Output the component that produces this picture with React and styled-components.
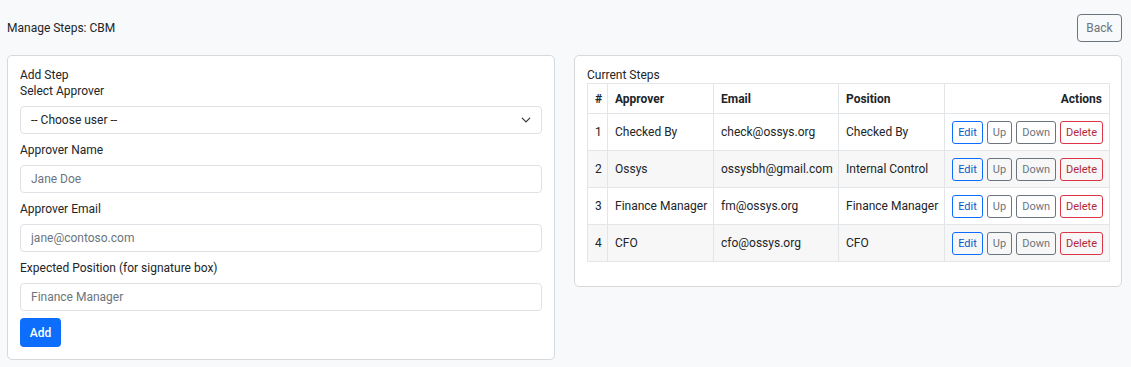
import React from 'react'
import styled, { createGlobalStyle } from 'styled-components'

const steps = [
  { name: 'Checked By', email: 'check@ossys.org', position: 'Checked By' },
  { name: 'Ossys', email: 'ossysbh@gmail.com', position: 'Internal Control' },
  { name: 'Finance Manager', email: 'fm@ossys.org', position: 'Finance Manager' },
  { name: 'CFO', email: 'cfo@ossys.org', position: 'CFO' },
]

const App = () => {
  return (
    <>
      <GlobalStyle />
      <Page>
        <Header>
          <Title>Manage Steps: CBM</Title>
          <BackButton>Back</BackButton>
        </Header>
        <Columns>
          <Card>
            <CardTitle>Add Step</CardTitle>
            <FieldLabel>Select Approver</FieldLabel>
            <SelectBox>
              <span>-- Choose user --</span>
              <svg width="10" height="10" viewBox="0 0 16 16">
                <path d="M2 5l6 6 6-6" fill="none" stroke="#343a40" strokeWidth="2" strokeLinecap="round" strokeLinejoin="round" />
              </svg>
            </SelectBox>
            <FieldLabel spaced>Approver Name</FieldLabel>
            <Input placeholder="Jane Doe" />
            <FieldLabel spaced>Approver Email</FieldLabel>
            <Input placeholder="jane@contoso.com" />
            <FieldLabel spaced>Expected Position (for signature box)</FieldLabel>
            <Input placeholder="Finance Manager" />
            <AddButton>Add</AddButton>
          </Card>
          <Card>
            <CardTitle>Current Steps</CardTitle>
            <Table>
              <colgroup>
                <col style={{ width: 20 }} />
                <col style={{ width: 106 }} />
                <col style={{ width: 125 }} />
                <col style={{ width: 106 }} />
                <col />
              </colgroup>
              <thead>
                <tr>
                  <Th>#</Th>
                  <Th>Approver</Th>
                  <Th>Email</Th>
                  <Th>Position</Th>
                  <Th right>Actions</Th>
                </tr>
              </thead>
              <tbody>
                {steps.map((s, i) => (
                  <Row key={s.email}>
                    <Td>{i + 1}</Td>
                    <Td>{s.name}</Td>
                    <Td>{s.email}</Td>
                    <Td>{s.position}</Td>
                    <Td right>
                      <Actions>
                        <SmallButton tone="#0d6efd" text="#0a58ca">Edit</SmallButton>
                        <SmallButton tone="#6c757d" text="#6c757d">Up</SmallButton>
                        <SmallButton tone="#6c757d" text="#6c757d">Down</SmallButton>
                        <SmallButton tone="#dc3545" text="#b02a37">Delete</SmallButton>
                      </Actions>
                    </Td>
                  </Row>
                ))}
              </tbody>
            </Table>
          </Card>
        </Columns>
      </Page>
    </>
  )
}

export default App

const GlobalStyle = createGlobalStyle`
body {
  margin: 0;
  background: #f8f9fa;
  font-family: Roboto, "Liberation Sans", sans-serif;
  color: #212529;
}
`

const Page = styled.div`
padding: 14px 9px 8px 7px;
width: 1131px;
box-sizing: border-box;
`

const Header = styled.div`
display: flex;
justify-content: space-between;
align-items: center;
height: 28px;
margin-bottom: 13px;
`

const Title = styled.div`
font-size: 12px;
`

const BackButton = styled.button`
height: 28px;
width: 45px;
padding: 0;
background: transparent;
border: 1px solid #6c757d;
border-radius: 4px;
color: #6c757d;
font-family: inherit;
font-size: 12px;
`

const Columns = styled.div`
display: grid;
grid-template-columns: 548px 548px;
gap: 19px;
align-items: start;
`

const Card = styled.div`
background: #fff;
border: 1px solid #d6d9dc;
border-radius: 5px;
padding: 11px 12px 12px 12px;
display: flex;
flex-direction: column;
`

const CardTitle = styled.div`
font-size: 12px;
line-height: 16px;
`

const FieldLabel = styled.div`
font-size: 12px;
line-height: 16px;
margin-top: ${(p) => (p.spaced ? '8px' : '0')};
margin-bottom: 7px;
`

const fieldBase = `
box-sizing: border-box;
height: 28px;
width: 100%;
border: 1px solid #dee2e6;
border-radius: 4px;
padding: 0 10px;
font-family: inherit;
font-size: 12px;
background: #fff;
`

const SelectBox = styled.div`
${fieldBase}
display: flex;
align-items: center;
justify-content: space-between;
color: #212529;
padding-right: 10px;
`

const Input = styled.input`
${fieldBase}
display: block;
outline: none;
&::placeholder {
  color: #6c757d;
}
`

const AddButton = styled.button`
margin-top: 7px;
align-self: flex-start;
height: 29px;
width: 41px;
padding: 0;
border: none;
border-radius: 4px;
background: #0d6efd;
color: #fff;
font-family: inherit;
font-weight: 500;
font-size: 12px;
`

const Table = styled.table`
margin-top: 0;
margin-bottom: 12px;
width: 523px;
table-layout: fixed;
border-collapse: collapse;
font-size: 12px;
`

const Th = styled.th`
height: 30px;
box-sizing: border-box;
padding: 0 7px;
border: 1px solid #e3e6e9;
font-weight: 700;
text-align: ${(p) => (p.right ? 'right' : 'left')};
white-space: nowrap;
`

const Row = styled.tr`
&:nth-child(even) {
  background: #f7f7f7;
}
`

const Td = styled.td`
height: 37px;
box-sizing: border-box;
padding: 0 ${(p) => (p.right ? '6px' : '7px')};
border: 1px solid #e3e6e9;
white-space: nowrap;
text-align: ${(p) => (p.right ? 'right' : 'left')};
`

const Actions = styled.div`
display: flex;
justify-content: flex-end;
gap: 4px;
`

const SmallButton = styled.button`
height: 23px;
padding: 0 5px;
background: transparent;
border: 1px solid ${(p) => p.tone};
border-radius: 3px;
color: ${(p) => p.text};
font-family: inherit;
font-size: 11px;
`
